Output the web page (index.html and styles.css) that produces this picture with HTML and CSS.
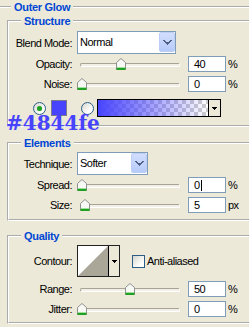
FILE: index.html
```html
<!DOCTYPE html>
<html lang="en">
<head>
    <meta charset="UTF-8">
    <meta name="viewport" content="width=device-width, initial-scale=1.0">
    <title>Outer Glow</title>
    <link rel="stylesheet" href="styles.css">
</head>
<body>
    <svg class="defs" width="0" height="0">
        <symbol id="thumb" viewBox="0 0 10 12">
            <path d="M0.5 11.5V4.5L5 0.5L9.5 4.5V11.5Z" fill="#f8f8f5" stroke="#8f9090"/>
            <path d="M1 9.5H9" stroke="#9fe09f"/>
            <path d="M0.5 10.5H9.5M0.5 11.5H9.5" stroke="#21a121"/>
        </symbol>
        <symbol id="chevron" viewBox="0 0 9 6">
            <path d="M0 1h2v1h1v1h3v-1h1v-1h2v1h-1v1h-1v1h-1v1h-1v1h-1v-1h-1v-1h-1v-1h-1v-1h-1z" fill="#4d6185"/>
        </symbol>
        <symbol id="arrow" viewBox="0 0 5 3">
            <path d="M0 0h5v1h-1v1h-1v1h-1v-1h-1v-1h-1z" fill="#000"/>
        </symbol>
    </svg>

    <fieldset class="group outer">
        <legend>Outer Glow</legend>

        <fieldset class="group structure">
            <legend>Structure</legend>
            <div class="row row-select">
                <span class="label">Blend Mode:</span>
                <div class="combo combo-wide">
                    <span class="combo-text">Normal</span>
                    <span class="combo-btn"><svg width="9" height="6"><use href="#chevron"/></svg></span>
                </div>
            </div>
            <div class="row">
                <span class="label">Opacity:</span>
                <div class="slider">
                    <div class="track"></div>
                    <svg class="thumb" style="left: 41px"><use href="#thumb"/></svg>
                </div>
                <span class="field">40</span><span class="unit">%</span>
            </div>
            <div class="row">
                <span class="label">Noise:</span>
                <div class="slider">
                    <div class="track"></div>
                    <svg class="thumb" style="left: 2px"><use href="#thumb"/></svg>
                </div>
                <span class="field">0</span><span class="unit">%</span>
            </div>
            <div class="row row-color">
                <span class="radio checked"></span>
                <span class="swatch"></span>
                <span class="radio second"></span>
                <div class="gradient">
                    <span class="gradient-fill"></span>
                    <span class="drop-btn"><svg width="5" height="3"><use href="#arrow"/></svg></span>
                </div>
            </div>
        </fieldset>

        <fieldset class="group elements">
            <legend>Elements</legend>
            <div class="row row-select">
                <span class="label">Technique:</span>
                <div class="combo combo-narrow">
                    <span class="combo-text">Softer</span>
                    <span class="combo-btn"><svg width="9" height="6"><use href="#chevron"/></svg></span>
                </div>
            </div>
            <div class="row">
                <span class="label">Spread:</span>
                <div class="slider">
                    <div class="track"></div>
                    <svg class="thumb" style="left: 2px"><use href="#thumb"/></svg>
                </div>
                <span class="field">0<span class="caret"></span></span><span class="unit">%</span>
            </div>
            <div class="row">
                <span class="label">Size:</span>
                <div class="slider">
                    <div class="track"></div>
                    <svg class="thumb" style="left: 5px"><use href="#thumb"/></svg>
                </div>
                <span class="field">5</span><span class="unit">px</span>
            </div>
        </fieldset>

        <fieldset class="group quality">
            <legend>Quality</legend>
            <div class="row row-contour">
                <span class="label">Contour:</span>
                <div class="contour">
                    <svg class="contour-preview" width="30" height="30" viewBox="0 0 30 30">
                        <polygon points="30,0 30,30 0,30" fill="#aaa799"/>
                    </svg>
                    <span class="drop-btn"><svg width="5" height="3"><use href="#arrow"/></svg></span>
                </div>
                <span class="check"></span>
                <span class="check-label">Anti-aliased</span>
            </div>
            <div class="row row-range">
                <span class="label">Range:</span>
                <div class="slider">
                    <div class="track"></div>
                    <svg class="thumb" style="left: 50px"><use href="#thumb"/></svg>
                </div>
                <span class="field">50</span><span class="unit">%</span>
            </div>
            <div class="row">
                <span class="label">Jitter:</span>
                <div class="slider">
                    <div class="track"></div>
                    <svg class="thumb" style="left: 2px"><use href="#thumb"/></svg>
                </div>
                <span class="field">0</span><span class="unit">%</span>
            </div>
        </fieldset>
    </fieldset>

    <div class="hex">#4844fe</div>
</body>
</html>
```

FILE: styles.css
```css
html, body {
    height: 327px;
    overflow: hidden;
}
body {
    margin: 0;
    background-color: #ece9d8;
    font-family: "Liberation Sans", Arial, sans-serif;
    font-size: 11px;
    letter-spacing: -0.5px;
    color: #000;
    position: relative;
}
.defs {
    position: absolute;
}

/* group boxes */
.group {
    margin: 0 0 0 8px;
    padding: 0;
    border: 2px groove #fff;
    min-width: 0;
    width: 300px;
}
.group legend {
    margin-left: 12px;
    padding: 0 3px;
    line-height: 14px;
    font-weight: bold;
    letter-spacing: -0.3px;
    color: #0046d5;
}
.outer {
    margin-left: -3px;
    width: 330px;
    padding-bottom: 20px;
}
.structure {
    padding-top: 3px;
    padding-bottom: 8px;
}
.elements {
    margin-top: 9px;
    padding-top: 2px;
    padding-bottom: 4px;
}
.quality {
    margin-top: 8px;
    padding-top: 2px;
    padding-bottom: 3px;
}

/* rows */
.row {
    display: flex;
    align-items: center;
    height: 20px;
}
.row-select {
    height: 23px;
}
.row-color {
    height: 18px;
    margin-top: 5px;
}
.row-contour {
    height: 32px;
}
.row-range {
    margin-top: 2px;
}
.label {
    flex: none;
    width: 63px;
    text-align: right;
}

/* combo box */
.combo {
    flex: none;
    display: flex;
    height: 23px;
    box-sizing: border-box;
    margin-left: 5px;
    padding-bottom: 1px;
    border: 1px solid #7f9db9;
    background-color: #fff;
}
.combo-wide {
    width: 99px;
}
.combo-narrow {
    width: 71px;
}
.combo-text {
    flex: 1;
    padding-left: 2px;
    line-height: 20px;
}
.combo-btn {
    flex: none;
    width: 16px;
    height: 20px;
    box-sizing: border-box;
    border: 1px solid #bccdf6;
    border-radius: 2px;
    background: linear-gradient(#d2defd, #b6cbf9);
    display: flex;
    align-items: center;
    justify-content: center;
}

/* slider */
.slider {
    flex: none;
    position: relative;
    width: 110px;
    height: 20px;
    margin-left: 3px;
}
.track {
    position: absolute;
    left: 5px;
    right: 5px;
    top: 9px;
    height: 2px;
    border: 1px solid;
    border-color: #a7a497 #fff #fff #a7a497;
    border-radius: 2px;
    background-color: #f1efe6;
}
.thumb {
    position: absolute;
    top: 4px;
    width: 10px;
    height: 12px;
}

/* text fields */
.field {
    flex: none;
    width: 38px;
    height: 16px;
    box-sizing: border-box;
    margin-left: 3px;
    padding-left: 5px;
    border: 1px solid #7f9db9;
    background-color: #fff;
    line-height: 14px;
}
.caret {
    display: inline-block;
    width: 1px;
    height: 11px;
    margin-left: 1px;
    vertical-align: -2px;
    background-color: #000;
}
.unit {
    margin-left: 2px;
}

/* colour row */
.radio {
    flex: none;
    position: relative;
    width: 13px;
    height: 13px;
    box-sizing: border-box;
    margin-left: 24px;
    border: 1px solid #2c5d87;
    border-radius: 50%;
    background: linear-gradient(135deg, #d6d6ce, #fff 70%);
}
.radio.checked::after {
    content: "";
    position: absolute;
    left: 3px;
    top: 3px;
    width: 5px;
    height: 5px;
    border-radius: 50%;
    background-color: #21a121;
    box-shadow: 0 0 1px #7bd67b;
}
.radio.second {
    margin-left: 14px;
}
.swatch {
    flex: none;
    width: 16px;
    height: 16px;
    box-sizing: border-box;
    margin-left: 5px;
    border: 1px solid #7b7b8c;
    background-color: #4844fe;
}
.gradient {
    flex: none;
    display: flex;
    width: 124px;
    height: 18px;
    box-sizing: border-box;
    margin-left: 3px;
    border: 1px solid #000;
}
.gradient-fill {
    flex: none;
    width: 110px;
    background:
        linear-gradient(to right, #4844fe, rgba(72, 68, 254, 0)),
        repeating-conic-gradient(#cdcdcd 0 25%, #fff 0 50%) 0 0 / 8px 8px;
}
.drop-btn {
    flex: 1;
    display: flex;
    align-items: center;
    justify-content: center;
    border-left: 1px solid #000;
    background-color: #ece9d8;
}

/* contour */
.contour {
    flex: none;
    display: flex;
    width: 43px;
    height: 32px;
    box-sizing: border-box;
    margin-left: 5px;
    border: 1px solid #222;
    background-color: #fff;
}
.contour-preview {
    flex: none;
    display: block;
}
.check {
    flex: none;
    width: 13px;
    height: 13px;
    box-sizing: border-box;
    margin-left: 12px;
    border: 1px solid #2c5d87;
    background: linear-gradient(135deg, #d6d6ce, #fff 75%);
}
.check-label {
    margin-left: 2px;
}

/* colour note drawn over the panel */
.hex {
    position: absolute;
    left: 6px;
    top: 113px;
    font-family: "DejaVu Serif", serif;
    font-weight: bold;
    font-size: 20px;
    line-height: 20px;
    letter-spacing: 0;
    color: #4844fe;
}
```
